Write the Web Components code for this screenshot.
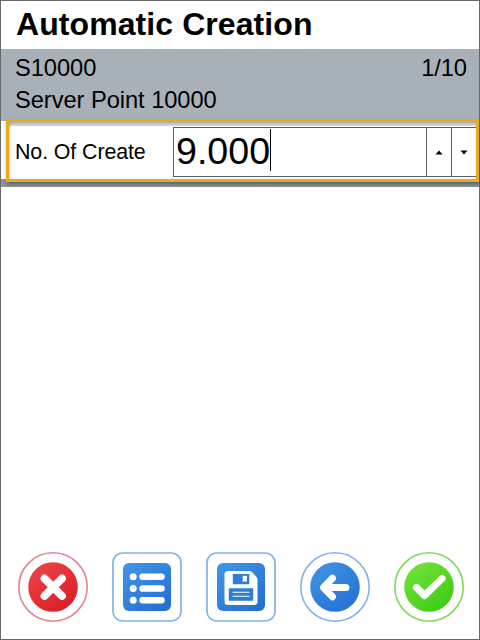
<!DOCTYPE html>
<html lang="en"><head><meta charset="utf-8"><title>Automatic Creation</title>
<style>html,body{margin:0;height:100%;overflow:hidden}body{font-family:"Liberation Sans",Arial,sans-serif;color:#000;background:#fff}</style></head>
<body>
<app-screen>
  <screen-title>Automatic Creation</screen-title>
  <record-header><span slot="code">S10000</span><span slot="page">1/10</span><span slot="name">Server Point 10000</span></record-header>
  <field-row><span slot="label">No. Of Create</span><number-stepper>9.000</number-stepper></field-row>
  <action-bar>
    <action-button kind="cancel"></action-button><action-button kind="list"></action-button><action-button kind="save"></action-button><action-button kind="back"></action-button><action-button kind="confirm"></action-button>
  </action-bar>
</app-screen>
<script>
function define(name, html) {
  const t = document.createElement('template');
  t.innerHTML = html;
  customElements.define(name, class extends HTMLElement {
    constructor() { super(); this.attachShadow({mode: 'open'}).append(t.content.cloneNode(true)); }
  });
}
define('app-screen', `<style>:host{display:flex;flex-direction:column;box-sizing:border-box;width:480px;height:640px;border:1px solid #69696b;background:#fff}</style><slot></slot>`);
define('screen-title', `<style>:host{display:block;height:48px;line-height:46px;padding-left:15px;font-size:32px;font-weight:700;letter-spacing:.08px;white-space:nowrap;box-sizing:border-box}</style><slot></slot>`);
define('record-header', `<style>:host{display:grid;grid-template-columns:1fr auto;grid-template-rows:32px 32px;height:72px;padding:3px 12px 0 14px;box-sizing:border-box;background:#a8b1b8;font-size:23.700px;line-height:32px;letter-spacing:-.06px}</style><slot name="code"></slot><slot name="page"></slot><slot name="name"></slot>`);
define('field-row', `<style>
:host{display:flex;position:relative;height:66px;padding:6px 3px 0 14px;box-sizing:border-box;border-bottom:8px solid #8a9499;background:#fff}
.label{width:158px;line-height:50px;font-size:21.400px;letter-spacing:-.1px;white-space:nowrap}
.focus{position:absolute;left:5px;top:-2px;right:0;height:63px;box-sizing:border-box;border:3px solid #e8ab1b;box-shadow:1px 2px 4px rgba(0,0,0,.38),inset 1px 1px 3px rgba(0,0,0,.22),inset 0 4px 1px rgba(0,0,0,.18);pointer-events:none}
</style><div class="label"><slot name="label"></slot></div><slot></slot><div class="focus"></div>`);
define('number-stepper', `<style>
:host{display:flex;flex:1;height:50px;box-sizing:border-box;border:1px solid #5c5c5e;border-right:0;background:#fff}
.value{flex:1;display:flex;align-items:flex-start;padding:1px 0 0 2px;font-size:37.600px;line-height:45px}
.caret{width:1px;height:42px;background:#000}
.step{width:24px;border-left:1px solid #5c5c5e;display:grid;place-items:center}
svg{display:block}
</style><div class="value"><slot></slot><i class="caret"></i></div>
<div class="step"><svg width="8" height="5"><path d="M.5 4.500 4 .5l3.500 4z"/></svg></div>
<div class="step"><svg width="8" height="5"><path d="M.5.5h7L4 4.500z"/></svg></div>`);
define('action-bar', `<style>:host{display:flex;margin-top:auto;height:87px;padding:0 3px 0 5px}</style><slot></slot>`);

const square = '<rect x="1" y="1" width="68" height="68" rx="9.500" fill="#fff" stroke="#82b4e6" stroke-width="1.700"/><rect x="11" y="11" width="48" height="48" rx="6" fill="url(#g)"/>';
const circle = c => `<circle cx="35" cy="35" r="34.200" fill="#fff" stroke="${c}" stroke-width="1.600"/><circle cx="35" cy="35" r="24.800" fill="url(#g)"/>`;
const blue = ['#4197e5', '#266fd5'];
const kinds = {
  cancel: [['#ec484b', '#dc1c25'], circle('#e0858c') + '<path d="M26.500 26.500l17.500 17.500m0-17.500l-17.500 17.500" stroke-width="7.800"/>'],
  list: [blue, square + '<path d="M30.500 24.700H49.500M30.500 36.500H49.500M30.500 48.300H49.500" stroke-width="6.500"/><g fill="#fff"><circle cx="21.200" cy="24.700" r="3.500"/><circle cx="21.200" cy="36.500" r="3.500"/><circle cx="21.200" cy="48.300" r="3.500"/></g>'],
  save: [blue, square + '<path d="M22.500 19H43.500Q45 19 46 20L50.500 25Q51.500 26 51.500 27.500V49.500Q51.500 53 48 53H22Q18.500 53 18.500 49.500V22.500Q18.500 19 22.500 19Z" fill="#fff" stroke="none"/><path d="M26.800 22H43.300V32.200H26.800ZM22.800 36.300H47.200V48.800H22.800Z" fill="#2f7bd8" stroke="none"/><path d="M36.700 23.800H40.900V29.600H36.700Z" fill="#fff" stroke="none"/><path d="M27 40.200H43M27 44.200H43" stroke-width="1.100"/>'],
  back: [blue, circle('#82b4e6') + '<path d="M32.500 26.300L23.500 35.500L32.500 44.700M24.500 35.500H46" stroke-width="7"/>'],
  confirm: [['#78e63c', '#3bcb12'], circle('#7fda58') + '<path d="M22.500 35.500L30.500 43.500L48 26.500" stroke-width="7.200"/>']
};
customElements.define('action-button', class extends HTMLElement {
  constructor() {
    super();
    const [g, body] = kinds[this.getAttribute('kind')];
    this.attachShadow({mode: 'open'}).innerHTML = `<style>:host{display:flex;flex:1;justify-content:center;align-items:flex-start}svg{display:block}</style>
    <svg width="70" height="70" viewBox="0 0 70 70" fill="none" stroke="none"><defs><linearGradient id="g" x1="0" y1="0" x2=".8" y2="1"><stop stop-color="${g[0]}"/><stop offset="1" stop-color="${g[1]}"/></linearGradient></defs><g fill="none" stroke-linecap="round" stroke-linejoin="round">${body.replace(/<path(?![^>]*stroke="none")/g, '<path stroke="#fff"')}</g></svg>`;
  }
});
</script>
</body></html>
